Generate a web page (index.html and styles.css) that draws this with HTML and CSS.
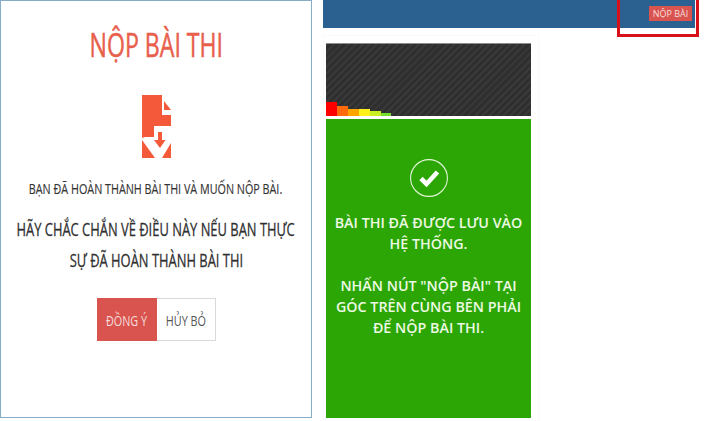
FILE: index.html
```html
<!DOCTYPE html>
<html lang="vi">
<head>
<meta charset="utf-8">
<title>Nộp bài thi</title>
<link rel="stylesheet" href="styles.css">
</head>
<body>
<main class="page">
  <section class="dialog">
    <h1 class="title"><span>NỘP BÀI THI</span></h1>
    <svg class="file-icon" viewBox="0 0 29 63" aria-hidden="true">
      <path fill="#f4593a" d="M0 0H20V20H29V31H12V42H3L0 43Z"/>
      <path fill="#f4593a" d="M22 6L29 15H22Z"/>
      <path fill="#f4593a" d="M0 45L13 63H0Z"/>
      <path fill="#f4593a" d="M29 48V63H20Z"/>
      <path fill="#f4593a" d="M16 37H20V45H23.5L18 53L12 45H16Z"/>
    </svg>
    <p class="lead"><span>BẠN ĐÃ HOÀN THÀNH BÀI THI VÀ MUỐN NỘP BÀI.</span></p>
    <h2 class="notice"><span>HÃY CHẮC CHẮN VỀ ĐIỀU NÀY NẾU BẠN THỰC</span><span>SỰ ĐÃ HOÀN THÀNH BÀI THI</span></h2>
    <div class="actions">
      <button class="btn btn-ok"><span>ĐỒNG Ý</span></button>
      <button class="btn btn-cancel"><span>HỦY BỎ</span></button>
    </div>
  </section>
  <section class="exam">
    <header class="topbar">
      <button class="submit">NỘP BÀI</button>
    </header>
    <div class="card">
      <div class="meter">
        <i class="bar b1"></i><i class="bar b2"></i><i class="bar b3"></i><i class="bar b4"></i><i class="bar b5"></i><i class="bar b6"></i>
      </div>
      <div class="saved">
        <svg class="check" viewBox="0 0 38 38" aria-hidden="true">
          <circle cx="19" cy="19" r="18.4" fill="none" stroke="#e4f5d8" stroke-width="1.1"/>
          <path d="M11 19.5L16.5 25L27.5 13" fill="none" stroke="#fff" stroke-width="4.6"/>
        </svg>
        <p class="msg">BÀI THI ĐÃ ĐƯỢC LƯU VÀO<br>HỆ THỐNG.</p>
        <p class="msg">NHẤN NÚT "NỘP BÀI" TẠI<br>GÓC TRÊN CÙNG BÊN PHẢI<br>ĐỂ NỘP BÀI THI.</p>
      </div>
    </div>
    <div class="highlight"></div>
  </section>
</main>
</body>
</html>
```
FILE: styles.css
```css
* { box-sizing: border-box; }
html, body { margin: 0; height: 100%; background: #fff; overflow: hidden; }
body { font-family: "Open Sans", "Noto Sans", sans-serif; }
.page { display: flex; width: 720px; height: 421px; align-items: flex-start; }

.dialog {
  width: 312px; height: 418px; flex: none;
  border: 1px solid #86adc8;
  display: flex; flex-direction: column; align-items: center;
  text-align: center; color: #333; padding-top: 22px;
}
.dialog span { display: inline-block; white-space: nowrap; }
.title { margin: 0; font-size: 33px; line-height: 44px; font-weight: 400; color: #e8604c; height: 44px; -webkit-text-stroke: .5px #e8604c; white-space: nowrap; }
.title span { transform: scaleX(.7); }
.file-icon { width: 29px; height: 63px; margin-top: 28px; display: block; }
.lead { margin: 21px 0 0; font-size: 14px; line-height: 20px; height: 20px; color: #333; -webkit-text-stroke: .15px #333; white-space: nowrap; }
.lead span { transform: scaleX(.77); }
.notice { margin: 15px 0 0; width: 100%; display: flex; flex-direction: column; align-items: center; font-size: 19px; line-height: 31px; font-weight: 400; color: #2f2f2f; -webkit-text-stroke: .3px #2f2f2f; white-space: nowrap; }
.notice span { display: block; flex: none; transform: scaleX(.68); }
.actions { display: flex; margin-top: 22px; }
.btn { width: 60px; height: 43px; font: inherit; font-size: 15px; padding: 0; border: 1px solid #d9d9d9; }
.btn span { transform: scaleX(.72); }
.btn-ok { background: #d9534f; border-color: #d9534f; color: #f6dcd9; width: 60px; }
.btn-cancel { background: #fff; color: #555; border-left: 0; width: 59px; }

.exam { position: relative; width: 408px; height: 421px; flex: none; padding-left: 11px; }
.topbar {
  width: 372px; height: 28px; background: #2a6190;
  display: flex; justify-content: flex-end; align-items: flex-start;
  padding: 6px 3px 0 0;
}
.submit {
  width: 43px; height: 15px; padding: 0; border: 0; background: #d9534f;
  color: #f6dede; font: inherit; font-size: 9px; line-height: 15px; white-space: nowrap;
}
.card {
  width: 216px; height: 386px; margin-top: 7px; padding: 7px 7px 3px 2px;
  border: 1px solid #fafafa; border-bottom: 0;
}
.meter {
  height: 73px; display: flex; align-items: flex-end;
  background-color: #343434;
  background-image: repeating-linear-gradient(135deg, #393939 0 2px, #2f2f2f 2px 5px);
  border-top: 1px solid #8c8c8c;
}
.bar { display: block; width: 11px; }
.b1 { height: 14px; background: #ff0000; }
.b2 { height: 10px; background: #ff6a0a; }
.b3 { height: 7px; background: #ffa500; }
.b4 { height: 7px; background: #ffef1a; }
.b5 { height: 5px; background: #c8ee26; }
.b6 { height: 3px; background: #74e02c; width: 10px; }
.saved {
  height: 299px; margin-top: 3px; background: #2ba605; padding-top: 40px;
  display: flex; flex-direction: column; align-items: center; text-align: center;
}
.check { width: 38px; height: 38px; display: block; }
.msg { margin: 0 0 21px; font-size: 14.3px; line-height: 21px; font-weight: 600; color: #eef9e4; white-space: nowrap; }
.check + .msg { margin-top: 15px; }

.highlight {
  position: absolute; left: 305px; top: -3px; width: 82px; height: 40px;
  border: 3px solid #d8101a;
}
```
